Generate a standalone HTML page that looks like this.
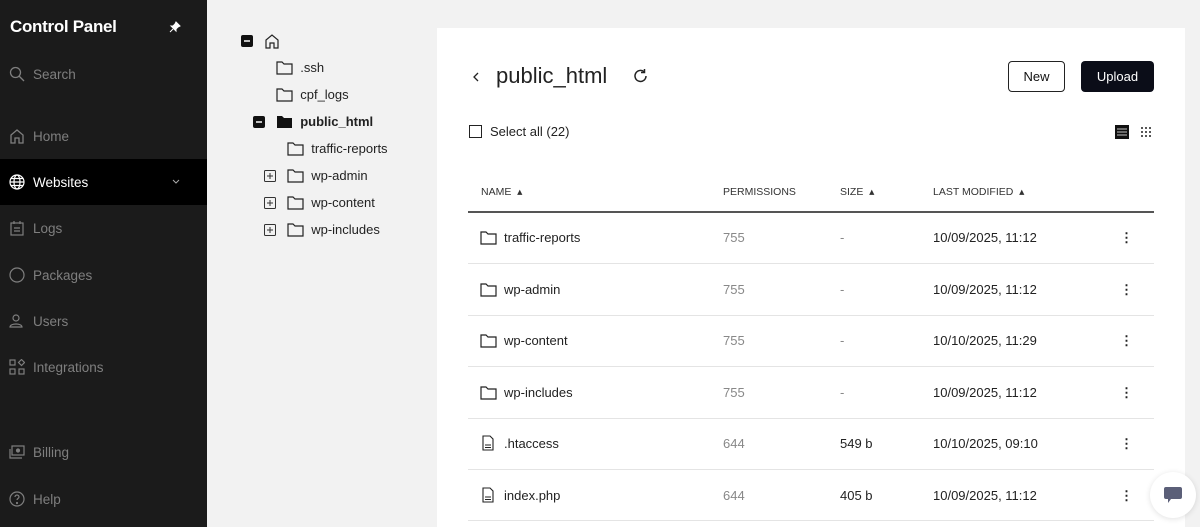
<!DOCTYPE html>
<html style="width:1200px;height:527px;overflow:hidden"><head><style>
*{margin:0;padding:0;box-sizing:border-box}
body{width:1200px;height:527px;overflow:hidden;background:#f2f2f2;font-family:"Liberation Sans",sans-serif;position:relative}
.sb{position:absolute;left:0;top:0;width:207px;height:527px;background:#1b1b1b;color:#7f7f7f}
.sb .t{position:absolute;left:10px;top:17px;color:#fff;font-weight:bold;font-size:17px;letter-spacing:-0.3px}
.it{position:absolute;left:0;width:207px;height:46px;display:flex;align-items:center;padding-left:9px;font-size:13.5px}
.it svg{margin-right:8px}
.tree{position:absolute;font-size:13px;color:#222}
.tree div{position:absolute;white-space:nowrap;display:flex;align-items:center}
.card{position:absolute;left:437px;top:28px;width:748px;height:499px;background:#fff}
.row{position:absolute;left:468px;width:686px;height:52px;border-bottom:1px solid #e4e4e4;font-size:13px;color:#222}
.row span{position:absolute;top:18px}
.hd{position:absolute;top:186px;font-size:10.5px;color:#333}
</style></head><body>
<div class="sb">
<div class="t">Control Panel</div>
<svg style="position:absolute;left:169px;top:21px" width="12" height="12" viewBox="0 0 12 12"><path d="M7 1l4 4-2 1-2 2 0 2-5-5 2 0 2-2z M4 8l-3 3" fill="#fff" stroke="#fff" stroke-width="1"/></svg>
<div class="it" style="top:51px"><svg width="16" height="16" viewBox="0 0 16 16" fill="none" stroke="#7f7f7f" stroke-width="1.3"><circle cx="6.5" cy="6.5" r="5"/><path d="M10 10l5 5"/></svg>Search</div>
<div class="it" style="top:113px"><svg width="16" height="16" viewBox="0 0 16 16" fill="none" stroke="#7f7f7f" stroke-width="1.3"><path d="M2 15V7l6-5 6 5v8h-4v-5H6v5z"/></svg>Home</div>
<div class="it" style="top:159px;background:#000;color:#fff"><svg width="16" height="16" viewBox="0 0 16 16" fill="none" stroke="#fff" stroke-width="1.2"><circle cx="8" cy="8" r="7"/><ellipse cx="8" cy="8" rx="3" ry="7"/><path d="M1 8h14M2 4.5h12M2 11.5h12"/></svg>Websites<svg style="position:absolute;left:172px" width="8" height="6" viewBox="0 0 8 6"><path d="M1 1l3 3 3-3" stroke="#aaa" fill="none"/></svg></div>
<div class="it" style="top:205px"><svg width="16" height="16" viewBox="0 0 16 16" fill="none" stroke="#7f7f7f" stroke-width="1.2"><rect x="2" y="3" width="12" height="12"/><path d="M5 1v3M11 1v3M5 8h6M5 11h6"/></svg>Logs</div>
<div class="it" style="top:252px"><svg width="16" height="16" viewBox="0 0 16 16" fill="none" stroke="#7f7f7f" stroke-width="1.2"><circle cx="8" cy="8" r="7"/></svg>Packages</div>
<div class="it" style="top:298px"><svg width="16" height="16" viewBox="0 0 16 16" fill="none" stroke="#7f7f7f" stroke-width="1.2"><circle cx="7" cy="5" r="3"/><path d="M1 14c0-4 12-4 12 0z"/></svg>Users</div>
<div class="it" style="top:344px"><svg width="16" height="16" viewBox="0 0 16 16" fill="none" stroke="#7f7f7f" stroke-width="1.2"><rect x="1" y="1" width="5" height="5"/><rect x="1" y="10" width="5" height="5"/><rect x="10" y="10" width="5" height="5"/><path d="M12.5 0.5l3 3-3 3-3-3z"/></svg>Integrations</div>
<div class="it" style="top:429px"><svg width="16" height="16" viewBox="0 0 16 16" fill="none" stroke="#7f7f7f" stroke-width="1.2"><rect x="3" y="2" width="12" height="9"/><circle cx="9" cy="6.5" r="1.5" fill="#7f7f7f"/><path d="M1 5v9h12"/></svg>Billing</div>
<div class="it" style="top:476px"><svg width="16" height="16" viewBox="0 0 16 16" fill="none" stroke="#7f7f7f" stroke-width="1.2"><circle cx="8" cy="8" r="7"/><path d="M6 6a2 2 0 114 0c0 1.5-2 1.5-2 3"/><circle cx="8" cy="12" r=".5"/></svg>Help</div>
</div>

<svg width="0" height="0" style="position:absolute"><defs>
<symbol id="fo" viewBox="0 0 17 14"><path d="M1 1h5l2 2h8v10H1z" fill="none" stroke="#222" stroke-width="1.2"/></symbol>
<symbol id="pl" viewBox="0 0 12 12"><rect x=".5" y=".5" width="11" height="11" rx="1" fill="none" stroke="#333"/><path d="M3 6h6M6 3v6" stroke="#333"/></symbol>
<symbol id="mi" viewBox="0 0 12 12"><rect width="12" height="12" rx="2" fill="#111"/><path d="M3 6h6" stroke="#fff" stroke-width="1.5"/></symbol>
</defs></svg>
<div class="tree">
<div style="left:241px;top:33px"><svg width="12" height="12"><use href="#mi"/></svg><svg style="margin-left:11px" width="16" height="16" viewBox="0 0 16 16" fill="none" stroke="#222" stroke-width="1.2"><path d="M2 15V7l6-5 6 5v8h-4v-5H6v5z"/></svg></div>
<div style="left:276px;top:60px"><svg width="17" height="14"><use href="#fo"/></svg>&nbsp;&nbsp;.ssh</div>
<div style="left:276px;top:87px"><svg width="17" height="14"><use href="#fo"/></svg>&nbsp;&nbsp;cpf_logs</div>
<div style="left:253px;top:114px;font-weight:bold"><svg width="12" height="12"><use href="#mi"/></svg><svg style="margin-left:11px" width="17" height="14" viewBox="0 0 17 14"><path d="M1 1h5l2 2h8v10H1z" fill="#111"/></svg>&nbsp;&nbsp;public_html</div>
<div style="left:287px;top:141px"><svg width="17" height="14"><use href="#fo"/></svg>&nbsp;&nbsp;traffic-reports</div>
<div style="left:264px;top:168px"><svg width="12" height="12"><use href="#pl"/></svg><svg style="margin-left:11px" width="17" height="14"><use href="#fo"/></svg>&nbsp;&nbsp;wp-admin</div>
<div style="left:264px;top:195px"><svg width="12" height="12"><use href="#pl"/></svg><svg style="margin-left:11px" width="17" height="14"><use href="#fo"/></svg>&nbsp;&nbsp;wp-content</div>
<div style="left:264px;top:222px"><svg width="12" height="12"><use href="#pl"/></svg><svg style="margin-left:11px" width="17" height="14"><use href="#fo"/></svg>&nbsp;&nbsp;wp-includes</div>
</div>

<div class="card"></div>
<svg style="position:absolute;left:472px;top:71px" width="8" height="12" viewBox="0 0 8 12"><path d="M6 2L2 6l4 4" fill="none" stroke="#222" stroke-width="1.3"/></svg>
<div style="position:absolute;left:496px;top:63px;font-size:22px;color:#222">public_html</div>
<svg style="position:absolute;left:632px;top:67px" width="18" height="18" viewBox="0 0 18 18" fill="none" stroke="#222" stroke-width="1.5"><path d="M14 9a5.5 5.5 0 11-2-4.3"/><path d="M12.5 2v3.5H9"/></svg>
<div style="position:absolute;left:1008px;top:61px;width:57px;height:31px;border:1px solid #222;border-radius:4px;font-size:13px;display:flex;align-items:center;justify-content:center;color:#111">New</div>
<div style="position:absolute;left:1081px;top:61px;width:73px;height:31px;background:#0b0d18;border-radius:4px;font-size:13px;display:flex;align-items:center;justify-content:center;color:#fff">Upload</div>
<div style="position:absolute;left:469px;top:125px;width:13px;height:13px;border:1.3px solid #222"></div>
<div style="position:absolute;left:490px;top:124px;font-size:13px;color:#222">Select all (22)</div>
<svg style="position:absolute;left:1115px;top:125px" width="14" height="14" viewBox="0 0 14 14"><rect width="14" height="14" fill="#111"/><path d="M2 4h10M2 7h10M2 10h10" stroke="#fff" stroke-width=".8"/></svg>
<svg style="position:absolute;left:1140px;top:126px" width="12" height="12" fill="#222"><circle cx="2" cy="2" r="1"/><circle cx="6" cy="2" r="1"/><circle cx="10" cy="2" r="1"/><circle cx="2" cy="6" r="1"/><circle cx="6" cy="6" r="1"/><circle cx="10" cy="6" r="1"/><circle cx="2" cy="10" r="1"/><circle cx="6" cy="10" r="1"/><circle cx="10" cy="10" r="1"/></svg>
<div class="hd" style="left:481px">NAME &nbsp;▴</div>
<div class="hd" style="left:723px">PERMISSIONS</div>
<div class="hd" style="left:840px">SIZE &nbsp;▴</div>
<div class="hd" style="left:933px">LAST MODIFIED &nbsp;▴</div>
<div style="position:absolute;left:468px;top:211px;width:686px;height:2px;background:#555"></div>

<div class="row" style="top:212px"><svg style="position:absolute;left:12px;top:19px" width="17" height="14"><use href="#fo"/></svg><span style="left:36px">traffic-reports</span><span style="left:255px;color:#888">755</span><span style="left:372px;color:#888">-</span><span style="left:465px">10/09/2025, 11:12</span><span style="left:652px;font-weight:bold">⋮</span></div>
<div class="row" style="top:264px"><svg style="position:absolute;left:12px;top:19px" width="17" height="14"><use href="#fo"/></svg><span style="left:36px">wp-admin</span><span style="left:255px;color:#888">755</span><span style="left:372px;color:#888">-</span><span style="left:465px">10/09/2025, 11:12</span><span style="left:652px;font-weight:bold">⋮</span></div>
<div class="row" style="top:315px"><svg style="position:absolute;left:12px;top:19px" width="17" height="14"><use href="#fo"/></svg><span style="left:36px">wp-content</span><span style="left:255px;color:#888">755</span><span style="left:372px;color:#888">-</span><span style="left:465px">10/10/2025, 11:29</span><span style="left:652px;font-weight:bold">⋮</span></div>
<div class="row" style="top:367px"><svg style="position:absolute;left:12px;top:19px" width="17" height="14"><use href="#fo"/></svg><span style="left:36px">wp-includes</span><span style="left:255px;color:#888">755</span><span style="left:372px;color:#888">-</span><span style="left:465px">10/09/2025, 11:12</span><span style="left:652px;font-weight:bold">⋮</span></div>
<div class="row" style="top:418px"><svg style="position:absolute;left:14px;top:17px" width="12" height="16" viewBox="0 0 12 16" fill="none" stroke="#222" stroke-width="1.1"><path d="M1 1h7l3 3v11H1z M3 10h6M3 12.5h6"/></svg><span style="left:36px">.htaccess</span><span style="left:255px;color:#888">644</span><span style="left:372px">549 b</span><span style="left:465px">10/10/2025, 09:10</span><span style="left:652px;font-weight:bold">⋮</span></div>
<div class="row" style="top:470px;height:51px"><svg style="position:absolute;left:14px;top:17px" width="12" height="16" viewBox="0 0 12 16" fill="none" stroke="#222" stroke-width="1.1"><path d="M1 1h7l3 3v11H1z M3 10h6M3 12.5h6"/></svg><span style="left:36px">index.php</span><span style="left:255px;color:#888">644</span><span style="left:372px">405 b</span><span style="left:465px">10/09/2025, 11:12</span><span style="left:652px;font-weight:bold">⋮</span></div>

<div style="position:absolute;left:1150px;top:472px;width:46px;height:46px;border-radius:50%;background:#fff;box-shadow:0 1px 6px rgba(0,0,0,.12)"></div>
<svg style="position:absolute;left:1163px;top:486px" width="20" height="18" viewBox="0 0 20 18"><path d="M3 1h14a2 2 0 012 2v8a2 2 0 01-2 2H8l-3 4v-4H3a2 2 0 01-2-2V3a2 2 0 012-2z" fill="#5b5f78"/></svg>
</body></html>
